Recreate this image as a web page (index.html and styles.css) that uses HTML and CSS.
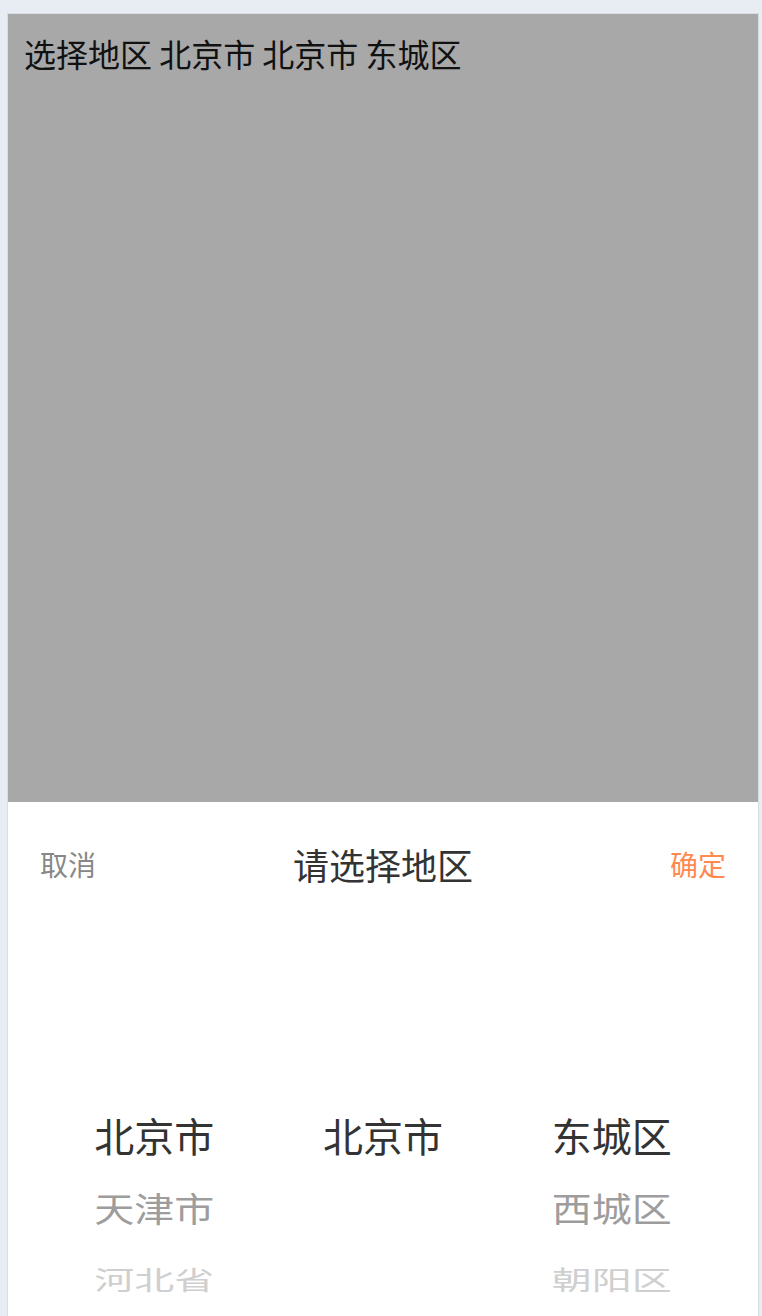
FILE: index.html
```html
<!DOCTYPE html>
<html lang="zh-CN">
<head>
<meta charset="utf-8">
<title>选择地区</title>
<link rel="stylesheet" href="styles.css">
</head>
<body>
<div class="frame">
  <div class="mask">
    <p class="result">选择地区 北京市 北京市 东城区</p>
  </div>
  <div class="sheet">
    <div class="sheet-head">
      <span class="btn-cancel">取消</span>
      <span class="sheet-title">请选择地区</span>
      <span class="btn-ok">确定</span>
    </div>
    <div class="picker">
      <div class="col">
        <div class="item"></div>
        <div class="item"></div>
        <div class="item cur">北京市</div>
        <div class="item near">天津市</div>
        <div class="item far">河北省</div>
      </div>
      <div class="col">
        <div class="item"></div>
        <div class="item"></div>
        <div class="item cur">北京市</div>
        <div class="item near"></div>
        <div class="item far"></div>
      </div>
      <div class="col">
        <div class="item"></div>
        <div class="item"></div>
        <div class="item cur">东城区</div>
        <div class="item near">西城区</div>
        <div class="item far">朝阳区</div>
      </div>
    </div>
  </div>
</div>
</body>
</html>
```

FILE: styles.css
```css
html, body {
  margin: 0;
  padding: 0;
}
body {
  background: #e8ecf3;
  font-family: "Noto Sans CJK SC", "Noto Sans", sans-serif;
  overflow: hidden;
  height: 1316px;
}
.frame {
  margin: 13px 0 0 7px;
  width: 750px;
  border: 1px solid #d9dce3;
  border-bottom: 0;
  background: #fff;
  height: 1302px;
  overflow: hidden;
}
.mask {
  height: 788px;
  background: #a8a8a9;
  padding: 19px 16px 0;
  box-sizing: border-box;
}
.result {
  margin: 0;
  font-size: 32px;
  line-height: 40px;
  color: #111;
}
.sheet-head {
  height: 124px;
  display: flex;
  align-items: center;
  justify-content: space-between;
  padding: 0 32px;
}
.btn-cancel {
  font-size: 28px;
  color: #888;
}
.btn-ok {
  font-size: 28px;
  color: #ff8a4f;
}
.sheet-title {
  font-size: 36px;
  color: #333;
}
.picker {
  margin-top: 29px;
  padding: 0 32px;
  display: grid;
  grid-template-columns: repeat(3, 1fr);
}
.col {
  display: flex;
  flex-direction: column;
}
.item {
  height: 72px;
  line-height: 72px;
  text-align: center;
  font-size: 40px;
  color: #333;
}
.item.near {
  color: #9d9d9d;
  transform: scaleY(0.86);
}
.item.far {
  color: #cfcfcf;
  transform: scaleY(0.65);
}
```
